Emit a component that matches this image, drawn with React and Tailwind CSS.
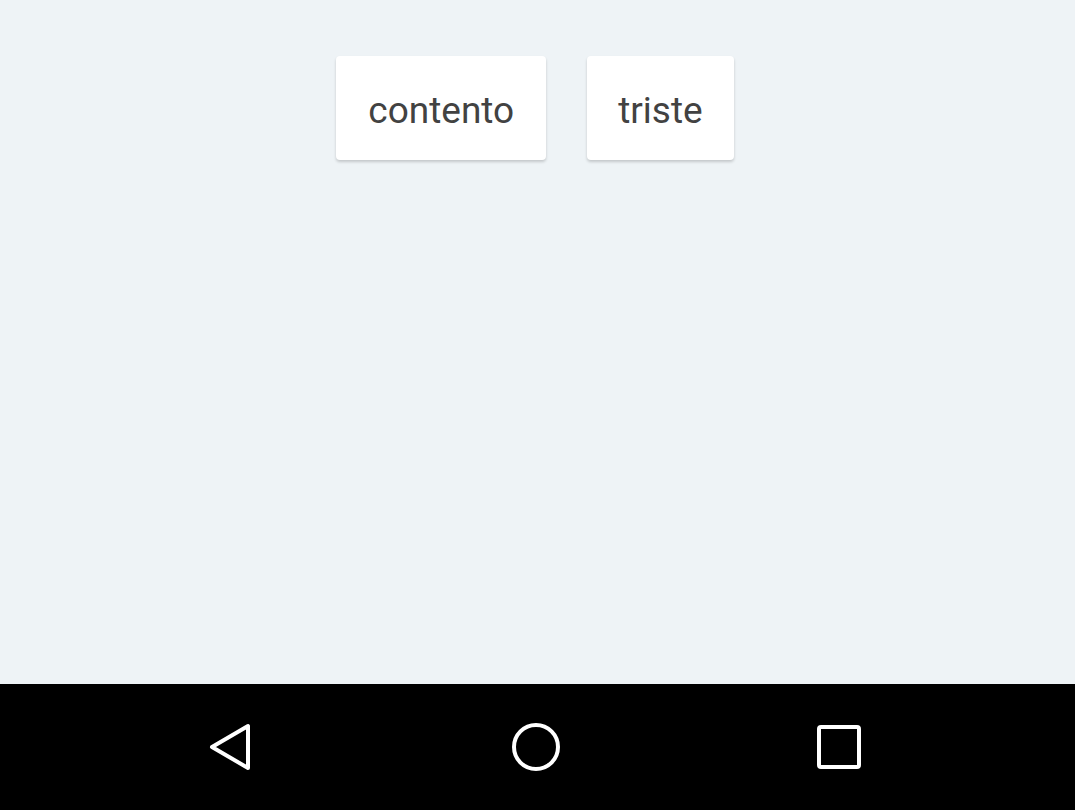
export default function App() {
  return (
    <div className="w-[1075px] h-[810px] flex flex-col bg-[#eef3f6] font-['Roboto',sans-serif]">
      <main className="flex-1 flex justify-center items-start gap-[41px] pt-[56px] pr-[5px]">
        <button className="h-[104px] px-[32px] pt-[5px] bg-white rounded-[4px] shadow-[0_2px_3px_rgba(0,0,0,0.18)] text-[37px] text-[#424242]">
          contento
        </button>
        <button className="h-[104px] px-[31px] pt-[5px] bg-white rounded-[4px] shadow-[0_2px_3px_rgba(0,0,0,0.18)] text-[37px] text-[#424242]">
          triste
        </button>
      </main>
      <nav className="h-[126px] bg-black">
        <div className="h-full flex items-center">
          <div className="w-[232px]" />
          <svg width="48" height="52" viewBox="0 0 48 52" className="-ml-[24px]">
            <path d="M40 5 L40 47 L4 26 Z" fill="none" stroke="white" strokeWidth="4" strokeLinejoin="round" />
          </svg>
          <div className="w-[255px]" />
          <svg width="50" height="50" viewBox="0 0 50 50">
            <circle cx="25" cy="25" r="22" fill="none" stroke="white" strokeWidth="4" />
          </svg>
          <div className="w-[255px]" />
          <svg width="46" height="46" viewBox="0 0 46 46">
            <rect x="3" y="3" width="40" height="40" rx="2" fill="none" stroke="white" strokeWidth="4" />
          </svg>
        </div>
      </nav>
    </div>
  );
}
